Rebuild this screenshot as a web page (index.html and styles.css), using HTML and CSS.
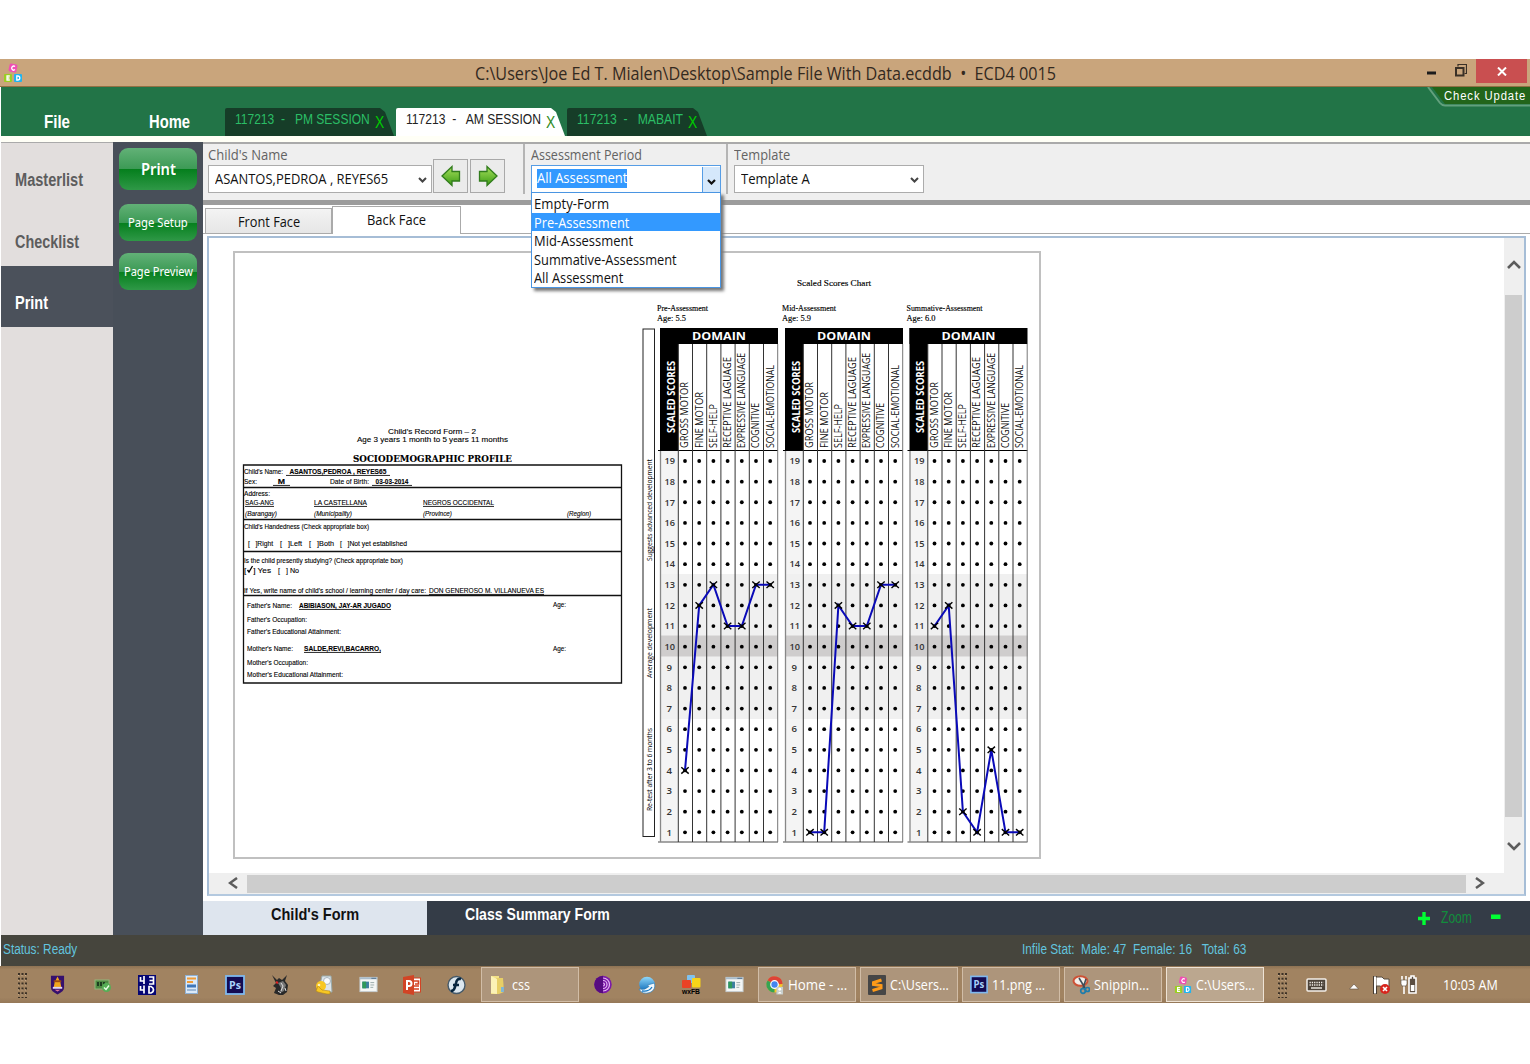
FILE: index.html
```html
<!DOCTYPE html>
<html lang="en">
<head>
<meta charset="utf-8">
<title>ECD4 0015</title>
<link rel="stylesheet" href="styles.css">
</head>
<body>
<svg class="defs" width="0" height="0">
  <defs>
    <symbol id="blocks" viewBox="0 0 20 20"><rect x="6" y="1" width="8" height="8" rx="1.5" fill="#f04fb4" transform="rotate(12 10 5)"/><rect x="1" y="11" width="8" height="8" rx="1" fill="#9bcf22"/><rect x="11" y="11" width="8" height="8" rx="1" fill="#22b4ee"/><g fill="none" stroke="#fff" stroke-width="1.3"><path d="M12 3.6A2 2 0 1 0 12 6.6"/><path d="M6.800 13H4v4h2.800M4 15h2.500"/><path d="M13.800 13v4h1a2 2 0 0 0 0-4z"/></g></symbol>
    <symbol id="ps" viewBox="0 0 20 20"><rect x="1" y="1" width="18" height="18" fill="#130b52" stroke="#7fb8ee" stroke-width="1.800"/><text x="4" y="14" font-family="Open Sans,sans-serif" font-weight="bold" font-size="11" textLength="12" lengthAdjust="spacingAndGlyphs" fill="#a8d2fa">Ps</text></symbol>
    <symbol id="window" viewBox="0 0 20 20"><rect x="1" y="2.500" width="18" height="15" fill="#f4f6f5" stroke="#c5cdd0"/><path d="M1 3.500h18" stroke="#a9bccb" stroke-width="2"/><path d="M13 3.500h5" stroke="#51708c"/><rect x="3.500" y="7" width="7" height="7" fill="#3d7fa0"/><rect x="3.500" y="7" width="4" height="7" fill="#2f9a5a"/><path d="M12 8h4M12 10.500h4M12 13h3" stroke="#9aa"/></symbol>
    <symbol id="grip" viewBox="0 0 10 26"><path d="M2 1v25M5.500 1v25M9 1v25" stroke="#3b3025" stroke-width="2" stroke-dasharray="2 2.800"/><path d="M1.500 3v23M5 3v23M8.500 3v23" stroke="#c9ad8e" stroke-width="1" stroke-dasharray="1 3.800"/></symbol>
    <linearGradient id="leaf" x1="0" y1="0" x2="0" y2="1"><stop offset="0" stop-color="#a6e05c"/><stop offset="1" stop-color="#3c9c14"/></linearGradient>
    <linearGradient id="globe" x1="0" y1="0" x2="0" y2="1"><stop offset="0" stop-color="#8fd8fb"/><stop offset="1" stop-color="#0764b4"/></linearGradient>
  </defs>
</svg>

<div class="desktop">
  <header class="titlebar">
    <svg class="app-icon" width="20" height="20"><use href="#blocks"/></svg>
    <span class="title" data-w="581">C:\Users\Joe Ed T. Mialen\Desktop\Sample File With Data.ecddb &nbsp;•&nbsp; ECD4 0015</span>
    <svg class="winmin" width="10" height="4"><rect y=".5" width="9" height="3" fill="#1c1c1c"/></svg>
    <svg class="winmax" width="12" height="13" fill="none" stroke="#3a3026"><path d="M3 2.500V.5h8.500v9h-2" stroke-width="1.200"/><rect x="1" y="4" width="7.500" height="7.500" stroke-width="2"/></svg>
    <div class="winclose"><svg width="10" height="9"><path d="M1 .5l8 8M9 .5l-8 8" stroke="#fff" stroke-width="2"/></svg></div>
  </header>

  <nav class="ribbon">
    <span class="menu file" data-w="26">File</span>
    <span class="menu home" data-w="41">Home</span>
    <div class="doctabs">
      <div class="doctab t1"><span data-w="135">117213 &nbsp;- &nbsp; PM SESSION</span><b data-w="9">X</b></div>
      <div class="doctab t2 current"><span data-w="135">117213 &nbsp;- &nbsp; AM SESSION</span><b data-w="9">X</b></div>
      <div class="doctab t3"><span data-w="106">117213 &nbsp;- &nbsp; MABAIT</span><b data-w="9">X</b></div>
    </div>
    <div class="update">
      <svg width="103" height="20"><path d="M5 0H103V17H18Z" fill="#22651a"/><path d="M1 0L13 16Q15 18.500 18 18.500H103" fill="none" stroke="#63a07d" stroke-width="2"/></svg>
      <span data-w="82">Check Update</span>
    </div>
  </nav>

  <div class="body">
    <aside class="sidebar">
      <div class="side"><span data-w="68">Masterlist</span></div>
      <div class="side"><span data-w="64">Checklist</span></div>
      <div class="side active"><span data-w="33">Print</span></div>
    </aside>
    <aside class="actions">
      <button class="glossy big"><span data-w="35">Print</span></button>
      <button class="glossy"><span data-w="60">Page Setup</span></button>
      <button class="glossy"><span data-w="69">Page Preview</span></button>
    </aside>

    <main>
      <section class="toolbar">
        <div class="field child"><label><span data-w="80">Child's Name</span></label><div class="combo"><span data-w="173">ASANTOS,PEDROA , REYES65</span><svg width="9" height="6"><path d="M1 1l3.500 3.500L8 1" fill="none" stroke="#444" stroke-width="2"/></svg></div></div>
        <button class="arrow"><svg width="20" height="22"><path d="M1 11L11 1.500V6.500H18.500V16H11V20.500Z" fill="url(#leaf)" stroke="#317c1c" stroke-width="1.300"/></svg></button>
        <button class="arrow"><svg width="20" height="22"><path d="M19 11L9 1.500V6.500H1.500V16H9V20.500Z" fill="url(#leaf)" stroke="#317c1c" stroke-width="1.300"/></svg></button>
        <div class="field period"><label><span data-w="111">Assessment Period</span></label>
          <div class="combo open"><em><span data-w="90">All Assessment</span></em><div class="drop"><svg width="9" height="6"><path d="M1 1l3.500 3.500L8 1" fill="none" stroke="#111" stroke-width="2.200"/></svg></div></div>
          <ul class="options">
            <li><span data-w="75">Empty-Form</span></li>
            <li class="hot"><span data-w="95">Pre-Assessment</span></li>
            <li><span data-w="99">Mid-Assessment</span></li>
            <li><span data-w="143">Summative-Assessment</span></li>
            <li><span data-w="89">All Assessment</span></li>
          </ul>
        </div>
        <div class="field template"><label><span data-w="56">Template</span></label><div class="combo"><span data-w="69">Template A</span><svg width="9" height="6"><path d="M1 1l3.500 3.500L8 1" fill="none" stroke="#444" stroke-width="2"/></svg></div></div>
      </section>

      <div class="facetabs">
        <div class="face"><span data-w="62">Front Face</span></div>
        <div class="face on"><span data-w="59">Back Face</span></div>
      </div>

      <section class="viewer">
        <div class="sheet">
          <svg id="paper" width="808" height="608" viewBox="233 251 808 608">
            <rect x="234" y="252" width="806" height="606" fill="#fff" stroke="#c0c0c0" stroke-width="2"/>
            <g class="form">
              <text x="388" y="433.500" textLength="88" class="head">Child's Record Form – 2</text>
              <text x="357" y="442" textLength="151" class="head">Age 3 years 1 month to 5 years 11 months</text>
              <text x="353" y="462" textLength="159" class="profile">SOCIODEMOGRAPHIC PROFILE</text>
              <path d="M243.500 465H621.500V683H243.500ZM243 487.500H622M243 519.500H622M243 551.500H622M243 595.500H622" fill="none" stroke="#111" stroke-width="1.300"/>
              <text x="244" y="474" textLength="39">Child's Name:</text><text x="286" y="474" textLength="104" class="u b">&nbsp; ASANTOS,PEDROA , REYES65 &nbsp;</text>
              <text x="244" y="484" textLength="13">Sex:</text><text x="273" y="484" textLength="17" class="u b">&nbsp; M &nbsp;</text><text x="330" y="484" textLength="39">Date of Birth:</text><text x="372" y="484" textLength="40" class="u b">&nbsp; 03-03-2014 &nbsp;</text>
              <text x="244" y="496" textLength="26">Address:</text>
              <text x="245" y="505" textLength="29" class="u">SAG-ANG</text><text x="314" y="505" textLength="53" class="u">LA CASTELLANA</text><text x="423" y="505" textLength="71" class="u">NEGROS OCCIDENTAL</text>
              <text x="245" y="516" textLength="32" class="i">(Barangay)</text><text x="314" y="516" textLength="38" class="i">(Municipality)</text><text x="423" y="516" textLength="29" class="i">(Province)</text><text x="567" y="516" textLength="24" class="i">(Region)</text>
              <text x="244" y="529" textLength="125">Child's Handedness (Check appropriate box)</text>
              <text x="248" y="545.500" textLength="25">[ &nbsp; ]Right</text><text x="280" y="545.500" textLength="22">[ &nbsp; ]Left</text><text x="309" y="545.500" textLength="25">[ &nbsp; ]Both</text><text x="340" y="545.500" textLength="67">[ &nbsp; ]Not yet established</text>
              <text x="244" y="562.500" textLength="159">Is the child presently studying? (Check appropriate box)</text>
              <text x="244" y="572.500" textLength="27">[ &nbsp; ] Yes</text><path d="M247.500 570l1.500 2 3.500-6" fill="none" stroke="#000" stroke-width="1.300"/><text x="278" y="572.500" textLength="21">[ &nbsp; ] No</text>
              <text x="244" y="593" textLength="182">If Yes, write name of child's school / learning center / day care:</text><text x="429" y="593" textLength="115" class="u">DON GENEROSO M. VILLANUEVA ES</text>
              <text x="247" y="608" textLength="45">Father's Name:</text><text x="299" y="608" textLength="92" class="u b">ABIBIASON, JAY-AR JUGADO</text><text x="553" y="607" textLength="13">Age:</text>
              <text x="247" y="621.500" textLength="60">Father's Occupation:</text>
              <text x="247" y="634" textLength="94">Father's Educational Attainment:</text>
              <text x="247" y="651" textLength="46">Mother's Name:</text><text x="304" y="651" textLength="77" class="u b">SALDE,REVI,BACARRO,</text><text x="553" y="651" textLength="13">Age:</text>
              <text x="247" y="665" textLength="61">Mother's Occupation:</text>
              <text x="247" y="677" textLength="96">Mother's Educational Attainment:</text>
            </g>
          </svg>
          <div class="vscroll">
            <svg width="14" height="9"><path d="M1 8l6-6 6 6" fill="none" stroke="#5c5c5c" stroke-width="2.600"/></svg>
            <div class="vthumb"></div>
            <svg width="14" height="9"><path d="M1 1l6 6 6-6" fill="none" stroke="#5c5c5c" stroke-width="2.600"/></svg>
          </div>
        </div>
        <div class="hscroll">
          <svg width="10" height="12"><path d="M9 1L2 6l7 5" fill="none" stroke="#5c5c5c" stroke-width="2.500"/></svg>
          <div class="hthumb"></div>
          <svg width="10" height="12"><path d="M1 1l7 5-7 5" fill="none" stroke="#5c5c5c" stroke-width="2.500"/></svg>
        </div>
      </section>

      <footer class="formtabs">
        <div class="formtab on"><span data-w="88">Child's Form</span></div>
        <div class="formtab"><span data-w="145">Class Summary Form</span></div>
        <div class="zoom"><svg width="12" height="13"><path d="M6 0v13M0 6.500h12" stroke="#0f3" stroke-width="3.400"/></svg><span data-w="31">Zoom</span><svg width="10" height="13"><rect y="2.500" width="9.500" height="4.500" fill="#0f3"/></svg></div>
      </footer>
    </main>
  </div>

  <div class="status"><span data-w="74">Status: Ready</span><span class="stat" data-w="224">Infile Stat: &nbsp;Male: 47 &nbsp;Female: 16 &nbsp; Total: 63</span></div>

  <div class="taskbar">
    <div class="grip"><svg width="10" height="26"><use href="#grip"/></svg></div>
    <div class="slot s46"><svg width="15" height="20" viewBox="0 0 16 20"><path d="M1 0H15V13Q15 17 8 20Q1 17 1 13Z" fill="#35106e"/><path d="M5 7L8 1l3 6 1 5H4Z" fill="#f0a51c"/><path d="M4 6h8" stroke="#9a4a12" stroke-width="2"/><path d="M3 12h10v2H3z" fill="#ded4f2"/><path d="M5 15h6l-3 2z" fill="#e07898"/></svg></div>
    <div class="slot s45"><svg width="18" height="16" viewBox="0 0 18 16"><rect x="1" y="3" width="14" height="9" fill="#4e8a42" stroke="#92b77c"/><path d="M4 5v4M7 5v4M10 5v4" stroke="#1d3d20" stroke-width="2"/><circle cx="12.500" cy="10.500" r="4.500" fill="#56ae56"/><path d="M10 10.500l2 2 3-4" stroke="#e8ffe4" fill="none" stroke-width="1.400"/></svg></div>
    <div class="slot"><svg width="18" height="20" viewBox="0 0 18 20"><rect width="18" height="20" fill="#060673"/><path d="M2.500 2v4h4M6 1v8M11 2h4.500v7H11M11.500 5.500h4M2.500 11v4h4M6 10.500v8M11 11.500v6.500h2q2.500-1 2.500-3.200T13 11.500z" fill="none" stroke="#fff" stroke-width="1.700"/></svg></div>
    <div class="slot"><svg width="13" height="19" viewBox="0 0 13 19"><rect x=".5" y=".5" width="12" height="18" fill="#dceaf8" stroke="#8fb0d2"/><path d="M2 3.500h9" stroke="#f09b35" stroke-width="2"/><path d="M2 7h6" stroke="#f09b35" stroke-width="2"/><path d="M2 9.500h9v3H2z" fill="#3e77ba"/><path d="M2 15h9" stroke="#88a8cc" stroke-width="1.500"/></svg></div>
    <div class="slot"><svg width="20" height="20"><use href="#ps"/></svg></div>
    <div class="slot"><svg width="18" height="20" viewBox="0 0 18 20"><path d="M1 0l5 5 2-2 3 2 5-5-2 6 3 4-1 7-4 3H8l-5-2 2-5-3-2 3-3z" fill="#292929"/><path d="M7 8l5-2 3 4-2 6-4 2 1-5z" fill="#777"/><path d="M10 8l2 3-2 5M14 13l1 3M7 16l3 2" stroke="#ddd" fill="none"/><path d="M5 7l2 1" stroke="#e22222" stroke-width="2"/></svg></div>
    <div class="slot"><svg width="18" height="20" viewBox="0 0 18 20"><path d="M7 1h9l1 16H8L5 10z" fill="#dce4ea" stroke="#9aa"/><circle cx="12" cy="6" r="3.500" fill="#f7fafc" stroke="#a8b4bc"/><circle cx="6" cy="11" r="5" fill="#f8c722"/><path d="M1 16l2-5 4 4 8 1v3h-3l-5-1-4-1z" fill="#f8c722" stroke="#b48618" stroke-width=".6"/><circle cx="4" cy="10" r="1.300" fill="#fff3ba"/></svg></div>
    <div class="slot"><svg width="19" height="19"><use href="#window"/></svg></div>
    <div class="slot"><svg width="18" height="20" viewBox="0 0 18 20"><rect x="9" y="3" width="8.500" height="14" fill="#fff" stroke="#d34324"/><path d="M11 6h4.500v3H12M11 11h5M11 14h5" stroke="#d34324" stroke-width="1.700" fill="none"/><path d="M0 2L11 0v20L0 18z" fill="#d24425"/><path d="M4 15V6h2a2.500 2.500 0 0 1 0 5H4" fill="none" stroke="#fff" stroke-width="2"/></svg></div>
    <div class="slot"><svg width="19" height="20" viewBox="0 0 19 20"><circle cx="9.500" cy="10" r="8.500" fill="#dce7ef" stroke="#465a69" stroke-width="1.400"/><path d="M14 4q-4-1-5 4l-1 4q-1 4-4 4M6 10h6" fill="none" stroke="#08263f" stroke-width="2.600"/></svg></div>
    <div class="task folder"><svg width="18" height="20" viewBox="0 0 18 20"><path d="M2 1h8v18H2z" fill="#f3e187"/><path d="M7 3h7l1 14-5 2H7z" fill="#e7cf66"/><path d="M2 1l6 3v15l-6-1z" fill="#fbf2b6"/><path d="M12 12h3v5h-3z" fill="#7fb6d5"/></svg><span data-w="18">css</span></div>
    <div class="slot s44"><svg width="18" height="19" viewBox="0 0 18 19"><circle cx="9" cy="9.500" r="8.700" fill="#7c18a8"/><path d="M9 0.800a8.700 8.700 0 0 0 0 17.400z" fill="#560b80"/><path d="M9 3a6.500 6.500 0 0 1 0 13M9 5.500a4 4 0 0 1 0 8M9 8a1.500 1.500 0 0 1 0 3" fill="none" stroke="#e4b6f4" stroke-width="1.200"/></svg></div>
    <div class="slot s44"><svg width="18" height="18" viewBox="0 0 18 18"><circle cx="9" cy="8.500" r="7.800" fill="url(#globe)"/><path d="M1 13q6 1.500 10-2.500l-1.500-1.500 7-2q1.500 7-4.500 9.500-8 2.500-11-3.500z" fill="#f2f8fc" stroke="#2d7cb8" stroke-width=".7"/><path d="M4 15q7 1 10-4" fill="none" stroke="#1477c4" stroke-width="1.300"/></svg></div>
    <div class="slot s44"><svg width="20" height="22" viewBox="0 0 20 22"><rect x="6" y="1" width="8" height="8" rx="1" fill="#7fc2f0"/><rect x="1" y="6" width="9" height="8" rx="1" fill="#ea4225"/><rect x="11" y="4" width="8.500" height="9.500" rx="1" fill="#f7d419"/><text x="1" y="19.500" textLength="18" lengthAdjust="spacingAndGlyphs" font-family="Liberation Sans,sans-serif" font-weight="bold" font-size="7.500">wxFB</text></svg></div>
    <div class="slot s44"><svg width="19" height="19"><use href="#window"/></svg></div>
    <div class="tasks">
      <div class="task"><svg width="18" height="20" viewBox="0 0 19 20"><circle cx="9" cy="9.500" r="8.500" fill="#f4c62a"/><path d="M9 9.500L1.600 5.200A8.500 8.500 0 0 1 17.500 9z" fill="#de4338"/><path d="M9 9.500L1.600 5.200A8.500 8.500 0 0 0 9 18z" fill="#37a353"/><circle cx="9" cy="9.500" r="4" fill="#4486ef" stroke="#fff" stroke-width="1.300"/><path d="M11 12h7v8h-7z" fill="#c8cfcd"/><circle cx="14.500" cy="14.500" r="1.500" fill="#fff"/><path d="M12.500 19q2-4 4 0z" fill="#fff"/></svg><span data-w="59">Home - ...</span></div>
      <div class="task"><svg width="18" height="20" viewBox="0 0 18 20"><rect width="18" height="20" rx="1" fill="#464646"/><path d="M13.500 5L5.500 7.500v2l7.500 1v2.500L4.500 15.500" fill="none" stroke="#ff9a18" stroke-width="3"/></svg><span data-w="59">C:\Users...</span></div>
      <div class="task"><svg width="18" height="19"><use href="#ps"/></svg><span data-w="53">11.png ...</span></div>
      <div class="task"><svg width="18" height="20" viewBox="0 0 18 20"><ellipse cx="8.500" cy="6" rx="7" ry="4.800" fill="#f3eee9" stroke="#cd5135" stroke-width="2"/><path d="M7 3l6 10M14 4l-3 9" stroke="#3c4d58" stroke-width="1.600"/><circle cx="11" cy="16" r="2.300" fill="none" stroke="#1e7cab" stroke-width="1.700"/><circle cx="15.500" cy="14.500" r="2" fill="none" stroke="#1e7cab" stroke-width="1.700"/></svg><span data-w="55">Snippin...</span></div>
      <div class="task lit"><svg width="18" height="20"><use href="#blocks"/></svg><span data-w="59">C:\Users...</span></div>
    </div>
    <div class="tray">
      <svg width="10" height="26"><use href="#grip"/></svg>
      <svg class="kb" width="21" height="14" viewBox="0 0 21 14"><rect x="1" y="1" width="19" height="12" rx="1" fill="#4c4339" stroke="#f4efe9" stroke-width="1.500"/><path d="M3.500 4.500h14M3.500 7h14" stroke="#f4efe9" stroke-width="1.400" stroke-dasharray="1.300 1"/><path d="M5 10h11" stroke="#f4efe9" stroke-width="1.400"/></svg>
      <svg class="up" width="10" height="7"><path d="M5 1l4.500 5h-9z" fill="#fff" stroke="#5a4c3c" stroke-width=".6"/></svg>
      <svg class="flag" width="18" height="20" viewBox="0 0 18 20"><path d="M2 1v18" stroke="#463c32" stroke-width="4"/><path d="M3 2h6l2 2h5v8h-7l-2-1H3z" fill="#fff" stroke="#574b3f"/><path d="M2 1.500v17" stroke="#fff" stroke-width="2"/><circle cx="12" cy="14" r="5" fill="#d7261e"/><path d="M10 12l4 4M14 12l-4 4" stroke="#fff" stroke-width="1.600"/></svg>
      <svg class="bat" width="18" height="20" viewBox="0 0 18 20"><path d="M11 3V1h3v2h2v15H9V3z" fill="#5b4e42" stroke="#fff" stroke-width="1.600"/><rect x="10.800" y="10" width="3.600" height="6" fill="#fff"/><path d="M2 1v4M6 1v4M4 10v9" stroke="#fff" stroke-width="1.600"/><path d="M1 5h6v4l-1 2H2L1 9z" fill="#fff" stroke="#51463a" stroke-width=".6"/></svg>
      <span class="clock" data-w="55">10:03 AM</span>
    </div>
  </div>
</div>
<script src="app.js"></script>
</body>
</html>
```
FILE: styles.css
```css
* { box-sizing: border-box; }
body { margin: 0; background: #fff; font-family: "Open Sans", "Noto Sans", sans-serif; font-size: 14px; color: #111; }
button { border: 0; padding: 0; font: inherit; }
.defs { position: absolute; }
.desktop { width: 1530px; height: 1064px; padding-top: 59px; overflow: hidden; }
[data-w] { display: block; flex: none; white-space: pre; }
[data-w] > i { display: inline-block; font-style: inherit; transform-origin: 0 50%; }

/* title bar */
.titlebar { height: 28px; background: #c9a57c; border-bottom: 1px solid #927044; display: flex; align-items: flex-start; }
.app-icon { margin: 4px 0 0 3px; }
.title { margin-left: 452px; font-size: 17.500px; line-height: 28px; color: #33291f; }
.winmin { margin: 12px 0 0 371px; }
.winmax { margin: 5px 0 0 18px; }
.winclose { width: 51px; height: 24px; margin-left: 9px; background: #c94f50; display: flex; align-items: center; justify-content: center; }

/* green ribbon */
.ribbon { height: 49px; background: #227447; display: flex; color: #fff; font-family: "Liberation Sans", sans-serif; margin-left: 1px; }
.menu { font-size: 18px; font-weight: bold; line-height: 22px; margin-top: 24px; }
.file { margin-left: 43px; }
.home { margin-left: 79px; }
.doctabs { display: flex; margin: 21px 0 0 35px; gap: 2px; }
.doctab { height: 28px; padding-left: 10px; background: #163d28; color: #2bbd66; display: flex; font-size: 15.500px; line-height: 22px; border-top-left-radius: 2px; }
.doctab b { font-weight: normal; font-size: 17px; line-height: 29px; color: #0c0; margin-left: 5px; }
.t1, .t2 { width: 169px; clip-path: polygon(0 0, 155px 0, 160px 4px, 169px 28px, 0 28px); }
.t3 { width: 140px; clip-path: polygon(0 0, 126px 0, 131px 4px, 140px 28px, 0 28px); }
.doctab.current { background: #fff; color: #222; }
.doctab.current b { color: #2f8a22; }
.update { margin-left: auto; width: 103px; height: 20px; display: grid; color: #fff; }
.update > * { grid-area: 1 / 1; }
.update span { margin-left: 17px; font-size: 12.500px; line-height: 19px; letter-spacing: 1px; }

/* columns */
.body { height: 799px; display: flex; margin-left: 1px; border-top: 6px solid #fffff6; }
.sidebar { width: 112px; background: #e2dedd; border-top: 1px solid #aaa; font-family: "Liberation Sans", sans-serif; font-weight: bold; font-size: 18px; color: #5d5d5d; }
.side { height: 61.500px; padding-left: 14px; display: flex; align-items: center; }
.side:first-child { margin-top: 7px; }
.side:nth-child(2) { height: 54px; padding-top: 8px; }
.side.active { background: #4b515b; color: #fff; height: 61px; padding-top: 14px; }
.actions { width: 90px; background: #484f59; padding: 6px 6px 0; display: flex; flex-direction: column; gap: 12px; }
.glossy { height: 37px; width: 78px; border-radius: 9px; color: #fff; font-family: "Noto Sans", sans-serif; font-size: 12px; background: linear-gradient(#62b177, #3c9a55 50%, #057f1d 51%, #2f9847); display: flex; align-items: center; justify-content: center; }
.glossy.big { height: 42px; margin-bottom: 2px; font-size: 15.500px; font-weight: 600; }
main { width: 1327px; display: flex; flex-direction: column; background: #fff; }

/* toolbar */
.toolbar { height: 63px; background: #efefef; border-top: 2px solid #aaa; border-bottom: 5px solid #9c9c9c; display: flex; padding-left: 5px; }
.field label { display: block; height: 21px; line-height: 22px; color: #636363; }
.combo { height: 28px; background: #fff; border: 1px solid #acacac; display: flex; align-items: center; justify-content: space-between; padding: 0 4px 2px 6px; }
.combo svg { margin-top: 4px; }
.child { width: 224px; margin-right: 1px; }
.arrow { width: 35px; height: 34px; margin: 15px 2px 0 0; border: 1px solid #a9a9a9; background: #ebebeb; display: flex; align-items: center; justify-content: center; }
.period { position: relative; margin-left: 16px; width: 205px; padding: 0 7px 0 6px; border-left: 2px solid #b5b5b5; border-right: 2px solid #b5b5b5; height: 50px; }
.combo.open { border: 1px solid #569de5; padding: 0 0 0 5px; width: 190px; }
.combo em { font-style: normal; background: #3399ff; color: #fff; line-height: 18px; height: 19px; margin-bottom: 2px; }
.drop { width: 18px; height: 26px; background: #d5e8fb; border-left: 1px solid #569de5; display: flex; align-items: center; justify-content: center; margin-bottom: -2px; }
.options { position: absolute; z-index: 2; left: 6px; top: 48px; width: 190px; margin: 0; padding: 1px 0 0; list-style: none; background: #fff; border: 1px solid #4a95e2; box-shadow: 3px 3px 3px #777; }
.options li { height: 18.500px; line-height: 19px; padding-left: 2px; }
.options .hot { background: #3399ff; color: #fff; }
.template { margin-left: 6px; width: 190px; }

/* face tabs and viewer */
.facetabs { height: 29px; display: flex; align-items: flex-end; padding-left: 2px; border-bottom: 1px solid #aaa; flex: none; }
.face { width: 127px; height: 25px; border: 1px solid #aaa; border-bottom: 0; background: linear-gradient(#f3f3f3, #e6e6e6); display: flex; align-items: center; justify-content: center; }
.face.on { width: 129px; height: 28px; background: #fff; margin-bottom: -1px; padding: 0 1px 2px 0; }
.viewer { width: 1319px; height: 660px; margin: 2px 0 5px 4px; border: 2px solid #a6bdd6; border-bottom-color: #b4c9df; display: flex; flex-direction: column; }
.sheet { display: flex; justify-content: space-between; height: 635px; padding-left: 24px; }
#paper { margin-top: 13px; }
.vscroll { width: 20px; background: #efefef; display: flex; flex-direction: column; align-items: center; padding: 22px 1px 0 0; }
.vthumb { width: 17px; height: 522px; background: #cdcdcd; margin: 26px 0 25px; flex: none; }
.hscroll { height: 21px; background: #efefef; display: flex; align-items: center; padding-left: 19px; }
.hscroll svg { flex: none; margin-top: -1px; }
.hthumb { width: 1219px; height: 18px; background: #cdcdcd; margin: 0 9px; flex: none; }

/* form tabs */
.formtabs { height: 34px; background: #343c47; display: flex; color: #fff; font-family: "Liberation Sans", sans-serif; font-size: 17px; font-weight: bold; }
.formtab { line-height: 27px; padding-left: 38px; }
.formtab.on { width: 224px; padding-left: 68px; background: #dee5ee; color: #111; }
.zoom { margin-left: auto; padding-right: 29px; display: flex; align-items: center; font-weight: normal; font-size: 16px; color: #128c3c; }
.zoom span { margin: 0 19px 0 11px; }

/* status line */
.status { height: 31px; margin-left: 1px; background: #46453d; color: #62c4df; font-family: "Liberation Sans", sans-serif; font-size: 15.500px; line-height: 28px; display: flex; padding-left: 2px; }
.stat { margin-left: 945px; }

/* taskbar */
.taskbar { height: 37px; display: flex; align-items: center; color: #fff; background: linear-gradient(#8e7253, #a18361 10%, #a18361 85%, #957858); }
.grip { width: 34px; padding-left: 17px; }
.taskbar svg { display: block; flex: none; }
.slot { width: 44.200px; height: 37px; flex: none; display: flex; align-items: center; justify-content: center; }
.s46 { width: 46px; }
.s45 { width: 45px; }
.s44 { width: 44px; }
.task { width: 98px; height: 35px; border: 1px solid #d1bda7; background: #ad957b; display: flex; align-items: center; padding-left: 7px; gap: 4px; flex: none; }
.task span { margin-top: -1px; }
.folder { margin: 0 2px; gap: 5px; }
.tasks { display: flex; gap: 4px; margin-left: 1px; }
.task.lit { background: #bba78f; border-color: #eee3d5; }
.tray { display: flex; align-items: center; padding-left: 13px; }
.kb { margin-left: 19px; }
.up { margin-left: 22px; margin-top: 3px; }
.flag { margin-left: 14px; }
.bat { margin-left: 9px; }
.clock { margin-left: 25px; }

/* printed page */
.form text { font: 7.500px "Liberation Sans", sans-serif; fill: #000; stroke: #000; stroke-width: .12px; }
.form .head { font-size: 8px; }
.form .profile { font: bold 9px "DejaVu Serif", serif; }
.form .u { text-decoration: underline; }
.form .b { font-weight: bold; }
.form .i { font-style: italic; }
.serif { font-family: "Liberation Serif", serif; font-size: 8.500px; stroke: #000; stroke-width: .15px; }
.sans { font-family: "Open Sans", sans-serif; }
```
FILE: app.js
```js
document.querySelectorAll('[data-w]').forEach(function (el) {
  var w = +el.dataset.w;
  var inner = document.createElement('i');
  while (el.firstChild) inner.appendChild(el.firstChild);
  el.appendChild(inner);
  inner.style.transform = 'scaleX(' + w / inner.offsetWidth + ')';
  el.style.width = w + 'px';
});

var NS = 'http://www.w3.org/2000/svg';
var paper = document.getElementById('paper');

function add(name, attrs, text) {
  var e = document.createElementNS(NS, name);
  for (var k in attrs) e.setAttribute(k, attrs[k]);
  if (text) e.textContent = text;
  paper.appendChild(e);
  return e;
}
function label(x, y, w, text, attrs, up) {
  var a = Object.assign({ x: x, y: y, textLength: w }, attrs);
  if (up) a.transform = 'rotate(-90 ' + x + ' ' + y + ')';
  add('text', a, text);
}
document.querySelectorAll('.form text').forEach(function (t) {
  t.setAttribute('lengthAdjust', 'spacingAndGlyphs');
});

var serif = { 'class': 'serif', lengthAdjust: 'spacingAndGlyphs' };
function sans(size, fill, weight) {
  return { 'class': 'sans', 'font-size': size, fill: fill, 'font-weight': weight || 400, lengthAdjust: 'spacingAndGlyphs' };
}

label(797, 286, 74, 'Scaled Scores Chart', serif);
add('rect', { x: 643, y: 329, width: 11.5, height: 507.5, fill: 'none', stroke: '#222' });
label(652, 561, 102, 'Suggests advanced development', sans(8, '#000'), true);
label(652, 678, 70, 'Average development', sans(8, '#000'), true);
label(652, 811, 83, 'Re-test after 3 to 6 months', sans(8, '#000'), true);

var domains = [['GROSS MOTOR', 66], ['FINE MOTOR', 56], ['SELF-HELP', 44], ['RECEPTIVE LAGUAGE', 91],
  ['EXPRESSIVE LANGUAGE', 95], ['COGNITIVE', 45], ['SOCIAL-EMOTIONAL', 83]];

function rowY(score) { return 461 + (19 - score) * 20.63; }

function chart(dx, name, nameW, age, scores) {
  var X = 660 + dx, i, s;
  label(X - 3, 311, nameW, name, serif);
  label(X - 3, 321, 29, 'Age: ' + age, serif);
  add('rect', { x: X, y: 450, width: 18, height: 392, fill: '#f4f4f4' });
  add('rect', { x: X, y: 574, width: 118, height: 145, fill: '#f0f0f0' });
  add('rect', { x: X, y: 635.5, width: 118, height: 21, fill: '#cfcdcd' });
  add('rect', { x: X, y: 328, width: 118, height: 16, fill: '#000' });
  add('rect', { x: X, y: 328, width: 18.3, height: 122, fill: '#000' });
  label(X + 32, 339.5, 54, 'DOMAIN', sans(11, '#fff', 700));
  label(X + 14.5, 433, 72, 'SCALED SCORES', sans(10.5, '#fff', 700), true);
  add('path', { d: 'M' + (X + .5) + ' 450V842M' + (X - 2) + ' 842H' + (X + 118), stroke: '#888', 'stroke-width': 1.3, fill: 'none' });
  add('path', { d: 'M' + (X - 2) + ' 450.500H' + (X + 118), stroke: '#000', 'stroke-width': 1.2 });
  for (i = 0; i < 8; i++) {
    var lx = X + 18.3 + i * 14.2;
    add('path', { d: 'M' + lx + ' 344V842', stroke: i === 7 ? '#777' : '#333', 'stroke-width': 1 });
  }
  for (i = 0; i < 7; i++) {
    var cx = X + 25 + i * 14.2;
    label(cx + 3.3, 448, domains[i][1], domains[i][0], sans(10.5, '#111'), true);
    for (s = 1; s <= 19; s++) add('circle', { cx: cx, cy: rowY(s), r: 1.9, fill: '#000' });
  }
  for (s = 1; s <= 19; s++) {
    label(X + (s > 9 ? 4.5 : 6.5), rowY(s) + 3.3, s > 9 ? 10.5 : 5.5, String(s), sans(9, '#333', 600));
  }
  var pts = scores.map(function (v, k) { return [X + 25 + k * 14.2, rowY(v)]; });
  add('polyline', { points: pts.join(' '), fill: 'none', stroke: '#0a0ab8', 'stroke-width': 2 });
  pts.forEach(function (p) {
    add('path', { d: 'M' + (p[0] - 3.7) + ' ' + (p[1] - 3.2) + 'l7.400 6.400m0-6.400l-7.400 6.400', stroke: '#000', 'stroke-width': 1.4 });
  });
}
chart(0, 'Pre-Assessment', 51, '5.5', [4, 12, 13, 11, 11, 13, 13]);
chart(125, 'Mid-Assessment', 54, '5.9', [1, 1, 12, 11, 11, 13, 13]);
chart(249.5, 'Summative-Assessment', 76, '6.0', [11, 12, 2, 1, 5, 1, 1]);
```
